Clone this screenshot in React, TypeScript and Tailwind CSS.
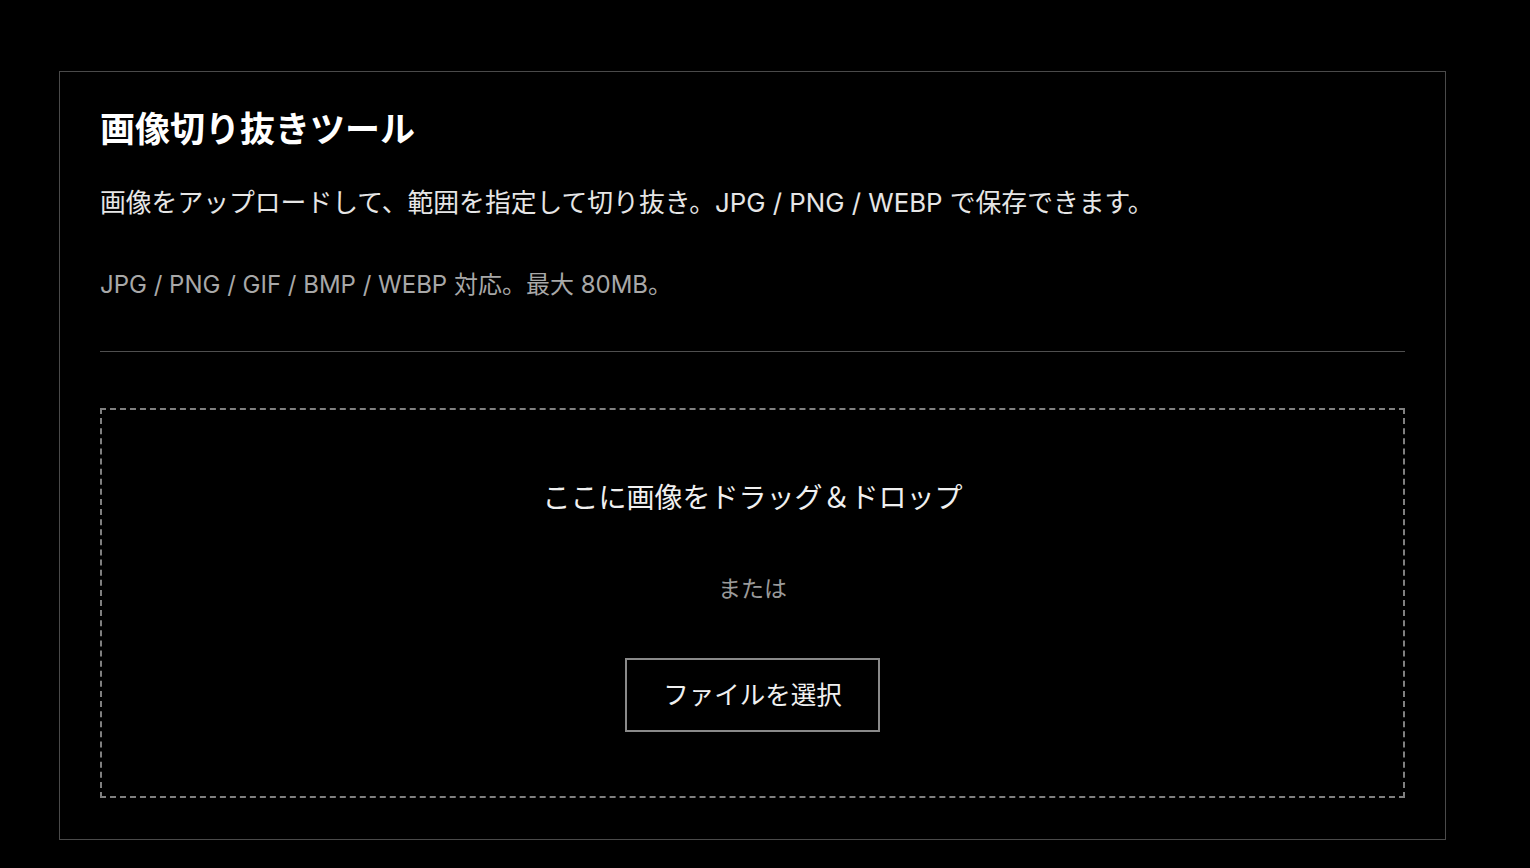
import React from "react";

export default function App() {
  return (
    <div
      className="min-h-[868px] w-full bg-black pl-[59px] pt-[71px] pb-[28px]"
      style={{ fontFamily: '"Inter", "Noto Sans CJK JP", sans-serif' }}
    >
      <div className="w-[1387px] border border-[#4a4a4a] px-[40px] pt-[33px] pb-[41px]">
        <h1 className="text-[35px] leading-[48px] font-bold text-white">
          画像切り抜きツール
        </h1>
        <p className="mt-[31px] text-[25.8px] leading-[38px] text-[#e6e6e6]">
          画像をアップロードして、範囲を指定して切り抜き。JPG / PNG / WEBP で保存できます。
        </p>
        <p className="mt-[45px] text-[24px] leading-[36px] text-[#a8a8a8]">
          JPG / PNG / GIF / BMP / WEBP 対応。最大 80MB。
        </p>
        <div className="mt-[48px] h-px w-full bg-[#4f4f4f]" />
        <div className="mt-[56px] flex h-[390px] flex-col items-center border-2 border-dashed border-[#808080] pt-[69px]">
          <div className="text-[28px] leading-[38px] text-[#f0f0f0]">
            ここに画像をドラッグ＆ドロップ
          </div>
          <div className="mt-[56px] text-[23px] leading-[32px] text-[#9a9a9a]">
            または
          </div>
          <button className="mt-[53px] flex h-[74px] w-[255px] items-center justify-center border-2 border-[#8a8a8a] bg-black text-[25.5px] text-[#f0f0f0]">
            ファイルを選択
          </button>
        </div>
      </div>
    </div>
  );
}
